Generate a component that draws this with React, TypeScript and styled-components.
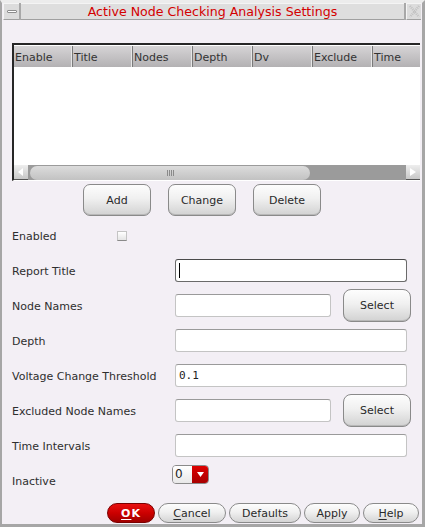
import React from 'react'
import styled, { createGlobalStyle } from 'styled-components'

/* ----------------------
   Global
---------------------- */

const GlobalStyle = createGlobalStyle`
  html, body {
    margin: 0;
    padding: 0;
    background: #f3eff5;
  }
  body {
    font-family: "DejaVu Sans", "Noto Sans", sans-serif;
    font-size: 11px;
    color: #2a2a2a;
  }
`

/* ----------------------
   Window frame
---------------------- */

const Window = styled.div`
  width: 425px;
  height: 527px;
  box-sizing: border-box;
  border-top: 3px solid #ececec;
  border-left: 2px solid #a6a6a6;
  border-right: 3px solid #a6a6a6;
  border-bottom: 3px solid #a6a6a6;
  background: #f3eff5;
  display: flex;
  flex-direction: column;
`

const TitleBar = styled.div`
  height: 17px;
  margin: 0 1px;
  display: flex;
  gap: 2px;
  background: #a8a8a8;
`

const TitleButton = styled.div<{ $w: number }>`
  width: ${({ $w }) => $w}px;
  box-sizing: border-box;
  background: #dcdcdc;
  border-top: 1px solid #f4f4f4;
  border-left: 1px solid #f4f4f4;
  border-bottom: 1px solid #a0a0a0;
  display: flex;
  align-items: center;
  justify-content: center;
`

const MinBar = styled.div`
  width: 10px;
  height: 3px;
  box-sizing: border-box;
  border: 1px solid #8c8c8c;
  background: #ffffff;
  border-radius: 1px;
`

const TitleText = styled.div`
  flex: 1;
  background: #dedede;
  border-top: 1px solid #f4f4f4;
  border-bottom: 1px solid #a0a0a0;
  color: #d40000;
  font-size: 12.6px;
  line-height: 15px;
  text-align: center;
`

/* ----------------------
   Body
---------------------- */

const Body = styled.div`
  flex: 1;
  padding: 23px 2px 0 10px;
  display: flex;
  flex-direction: column;
`

/* ----------------------
   Table
---------------------- */

const Table = styled.div`
  height: 138px;
  box-sizing: border-box;
  border-top: 2px solid #262626;
  border-left: 2px solid #262626;
  border-bottom: 1px solid #ffffff;
  background: #ffffff;
  display: flex;
  flex-direction: column;
  overflow: hidden;
`

const HeaderRow = styled.div`
  height: 21px;
  display: flex;
  margin-top: 1px;
  background: linear-gradient(#d6d4d6, #b3b1b3);
`

const HeaderCell = styled.div`
  width: 60px;
  flex-shrink: 0;
  box-sizing: border-box;
  padding-left: 1px;
  padding-top: 1px;
  line-height: 21px;
  color: #333333;
  border-right: 1px solid #7a7a7a;
  box-shadow: inset -1px 0 0 #e6e6e6;
  &:first-child {
    width: 59px;
  }
  &:last-child {
    border-right: none;
    box-shadow: none;
  }
`

const TableBody = styled.div`
  flex: 1;
  background: #ffffff;
`

const ScrollBar = styled.div`
  height: 15px;
  display: flex;
  background: #9b9b9b;
`

const ArrowButton = styled.div`
  width: 14px;
  background: linear-gradient(#eeeeee, #c8c8c8);
  border-bottom: 1px solid #555555;
  box-sizing: border-box;
  display: flex;
  align-items: center;
  justify-content: center;
`

const Trough = styled.div`
  flex: 1;
  padding: 1px 2px 0 2px;
  display: flex;
`

const Thumb = styled.div`
  width: 280px;
  height: 14px;
  border-radius: 7px;
  background: linear-gradient(#dcdcdc, #c2c2c2);
  display: flex;
  align-items: center;
  justify-content: center;
`

const Grip = styled.span`
  width: 7px;
  height: 6px;
  background: repeating-linear-gradient(90deg, #8a8a8a 0 1px, transparent 1px 2px);
`

/* ----------------------
   Buttons
---------------------- */

const ActionRow = styled.div`
  display: flex;
  gap: 17px;
  padding-left: 71px;
  margin-top: 3px;
`

const PlainButton = styled.button<{ $w: number; $h: number }>`
  width: ${({ $w }) => $w}px;
  height: ${({ $h }) => $h}px;
  padding: 0;
  font-family: "DejaVu Sans", sans-serif;
  font-size: 11px;
  color: #2a2a2a;
  border: 1px solid #8a8a8a;
  border-radius: 7px;
  background: linear-gradient(#fdfdfd 0%, #f0f0f0 45%, #d2d2d2 100%);
  box-shadow: inset 0 -1px 0 #b8b8b8;
`

/* ----------------------
   Form
---------------------- */

const Form = styled.div`
  margin-top: 2px;
  display: flex;
  flex-direction: column;
`

const Row = styled.div`
  height: 35px;
  display: flex;
  align-items: center;
`

const Label = styled.div<{ $w: number }>`
  width: ${({ $w }) => $w}px;
  flex-shrink: 0;
  padding-top: 2px;
  color: #2e2e2e;
`

const Check = styled.div`
  width: 10px;
  height: 10px;
  box-sizing: border-box;
  border: 1px solid #c4c4c4;
  border-bottom-color: #8a8a8a;
  background: linear-gradient(#ffffff, #e4e4e4);
`

const Field = styled.div<{ $w: number; $focus?: boolean; $mono?: boolean }>`
  width: ${({ $w }) => $w}px;
  height: 23px;
  box-sizing: border-box;
  background: #ffffff;
  border: 1px solid ${({ $focus }) => ($focus ? '#6a6a6a' : '#c4c4c4')};
  border-top-color: ${({ $focus }) => ($focus ? '#4a4a4a' : '#9a9a9a')};
  border-radius: 3px;
  padding-left: 3px;
  display: flex;
  align-items: center;
  font-family: ${({ $mono }) => ($mono ? '"DejaVu Sans Mono", monospace' : 'inherit')};
  font-size: 11px;
  color: #222222;
`

const Caret = styled.span`
  width: 1px;
  height: 15px;
  background: #000000;
`

const SelectButton = styled(PlainButton)`
  margin-left: 12px;
  border-radius: 8px;
`

const Dropdown = styled.div`
  align-self: flex-start;
  margin-top: 2px;
  width: 37px;
  height: 19px;
  box-sizing: border-box;
  display: flex;
  border: 1px solid #8a8a8a;
  border-radius: 4px;
  overflow: hidden;
`

const DropValue = styled.div`
  flex: 1;
  background: linear-gradient(#ffffff, #e8e8e8);
  padding-left: 2px;
  line-height: 17px;
  font-size: 12px;
  color: #222222;
`

const DropArrow = styled.div`
  width: 16px;
  background: linear-gradient(#dd0000, #a80000);
  display: flex;
  align-items: center;
  justify-content: center;
`

/* ----------------------
   Footer
---------------------- */

const Footer = styled.div`
  margin-top: 5px;
  padding-right: 1px;
  display: flex;
  justify-content: flex-end;
  gap: 3px;
`

const PillButton = styled.button<{ $w: number; $primary?: boolean }>`
  width: ${({ $w }) => $w}px;
  height: 20px;
  padding: 0;
  font-family: "DejaVu Sans", sans-serif;
  font-size: 11px;
  font-weight: ${({ $primary }) => ($primary ? 700 : 400)};
  color: ${({ $primary }) => ($primary ? '#ffffff' : '#2a2a2a')};
  border: 1px solid ${({ $primary }) => ($primary ? '#7a0000' : '#8a8a8a')};
  border-radius: 10px;
  background: ${({ $primary }) =>
    $primary
      ? 'linear-gradient(#e81010 0%, #cc0000 50%, #a00000 100%)'
      : 'linear-gradient(#fdfdfd 0%, #f0f0f0 45%, #d4d4d4 100%)'};
  letter-spacing: ${({ $primary }) => ($primary ? '1px' : '0')};

  u {
    text-decoration-thickness: 1px;
    text-underline-offset: 2px;
  }
`

/* ----------------------
   Component
---------------------- */

const columns = ['Enable', 'Title', 'Nodes', 'Depth', 'Dv', 'Exclude', 'Time']

const App = () => {
  return (
    <>
      <GlobalStyle />
      <Window>
        <TitleBar>
          <TitleButton $w={16}>
            <MinBar />
          </TitleButton>
          <TitleText>Active Node Checking Analysis Settings</TitleText>
          <TitleButton $w={15}>
            <svg width='11' height='13' viewBox='0 0 11 13'>
              <path d='M1 1 L10 12 M10 1 L1 12' stroke='#c0c0c0' strokeWidth='2.5' strokeDasharray='1 1' fill='none' />
            </svg>
          </TitleButton>
        </TitleBar>

        <Body>
          <Table>
            <HeaderRow>
              {columns.map((c) => (
                <HeaderCell key={c}>{c}</HeaderCell>
              ))}
            </HeaderRow>
            <TableBody />
            <ScrollBar>
              <ArrowButton>
                <svg width='6' height='8' viewBox='0 0 6 8'>
                  <path d='M5 0 L0 4 L5 8 Z' fill='#ffffff' />
                </svg>
              </ArrowButton>
              <Trough>
                <Thumb>
                  <Grip />
                </Thumb>
              </Trough>
              <ArrowButton>
                <svg width='6' height='8' viewBox='0 0 6 8'>
                  <path d='M0 0 L6 4 L0 8 Z' fill='#ffffff' />
                </svg>
              </ArrowButton>
            </ScrollBar>
          </Table>

          <ActionRow>
            <PlainButton $w={68} $h={32}>Add</PlainButton>
            <PlainButton $w={68} $h={32}>Change</PlainButton>
            <PlainButton $w={68} $h={32}>Delete</PlainButton>
          </ActionRow>

          <Form>
            <Row>
              <Label $w={105}>Enabled</Label>
              <Check />
            </Row>
            <Row>
              <Label $w={163}>Report Title</Label>
              <Field $w={232} $focus>
                <Caret />
              </Field>
            </Row>
            <Row>
              <Label $w={163}>Node Names</Label>
              <Field $w={156} />
              <SelectButton $w={68} $h={33}>Select</SelectButton>
            </Row>
            <Row>
              <Label $w={163}>Depth</Label>
              <Field $w={232} />
            </Row>
            <Row>
              <Label $w={163}>Voltage Change Threshold</Label>
              <Field $w={232} $mono>0.1</Field>
            </Row>
            <Row>
              <Label $w={163}>Excluded Node Names</Label>
              <Field $w={156} />
              <SelectButton $w={68} $h={33}>Select</SelectButton>
            </Row>
            <Row>
              <Label $w={163}>Time Intervals</Label>
              <Field $w={232} />
            </Row>
            <Row>
              <Label $w={160}>Inactive</Label>
              <Dropdown>
                <DropValue>0</DropValue>
                <DropArrow>
                  <svg width='7' height='5' viewBox='0 0 7 5'>
                    <path d='M0 0 L7 0 L3.5 5 Z' fill='#ffffff' />
                  </svg>
                </DropArrow>
              </Dropdown>
            </Row>
          </Form>

          <Footer>
            <PillButton $w={48} $primary>
              <u>O</u>K
            </PillButton>
            <PillButton $w={68}>
              <u>C</u>ancel
            </PillButton>
            <PillButton $w={72}>Defaults</PillButton>
            <PillButton $w={56}>Apply</PillButton>
            <PillButton $w={56}>
              <u>H</u>elp
            </PillButton>
          </Footer>
        </Body>
      </Window>
    </>
  )
}

export default App
